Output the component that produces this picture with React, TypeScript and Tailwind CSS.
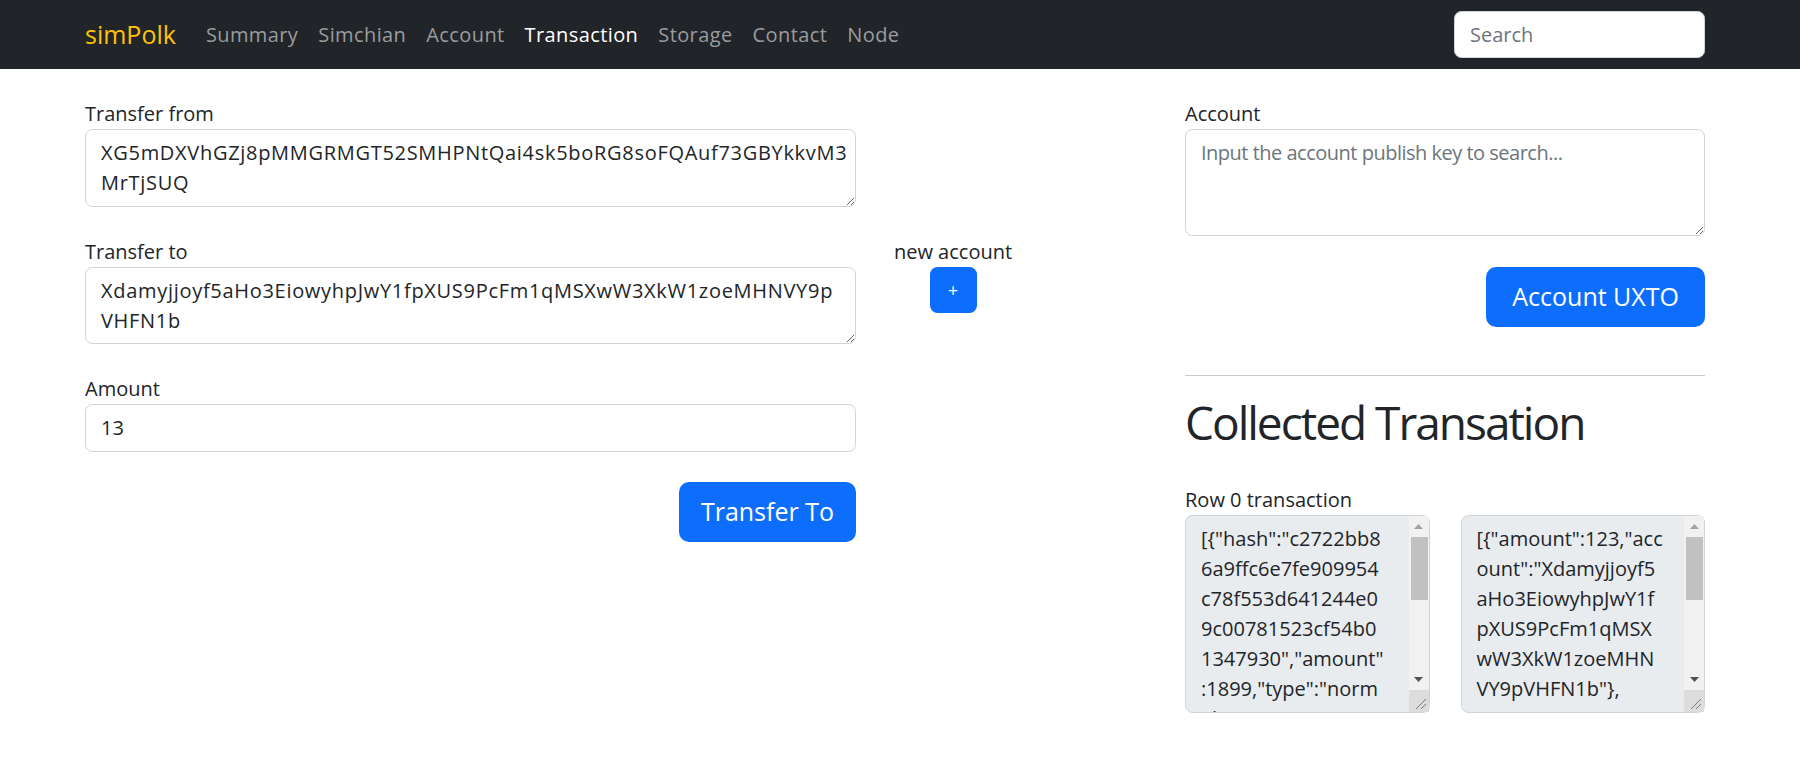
import React from "react";

const FONT = { fontFamily: '"Open Sans", "Noto Sans", sans-serif' };

function FakeScroll() {
  return (
    <div className="pointer-events-none absolute right-[1px] top-[1px] bottom-[1px] flex w-[20px] flex-col bg-[#f1f1f1]">
      <div className="flex h-[21px] items-center justify-center">
        <svg width="9" height="5" viewBox="0 0 9 5">
          <path d="M0 5 L4.5 0 L9 5Z" fill="#a3a3a3" />
        </svg>
      </div>
      <div className="ml-[2px] mr-[1px] h-[63px] bg-[#c1c1c1]" />
      <div className="flex-1" />
      <div className="flex h-[22px] items-center justify-center">
        <svg width="9" height="5" viewBox="0 0 9 5">
          <path d="M0 0 L4.5 5 L9 0Z" fill="#505050" />
        </svg>
      </div>
      <div className="relative h-[22px] bg-[#dcdcdc]">
        <svg className="absolute right-0 bottom-0" width="22" height="22" viewBox="0 0 22 22">
          <path d="M19 9 L9 19 M19 14 L14 19" stroke="#7a7a7a" strokeWidth="1" />
        </svg>
      </div>
    </div>
  );
}

function ReadBox({ text }: { text: string }) {
  return (
    <div className="relative h-[198px]">
      <textarea
        readOnly
        wrap="off"
        defaultValue={text}
        className="block h-full w-full resize-none overflow-hidden rounded-[7.5px] border border-[#ced4da] bg-[#e9ecef] py-[7.5px] pl-[15px] pr-[35px] text-[20px] leading-[30px] tracking-[0px] text-[#212529] outline-none"
        style={FONT}
      />
      <FakeScroll />
    </div>
  );
}

const fieldCls =
  "block w-full rounded-[7.5px] border border-[#ced4da] bg-white px-[15px] text-[20px] text-[#212529] outline-none";

export default function App() {
  const links = ["Summary", "Simchian", "Account", "Transaction", "Storage", "Contact", "Node"];
  return (
    <div className="min-h-screen bg-white text-[#212529]" style={FONT}>
      <nav className="h-[69px] bg-[#212529]">
        <div className="ml-[85px] flex h-full w-[1620px] items-center">
          <span className="mr-[20px] text-[25px] leading-[37px] text-[#ffc107]">simPolk</span>
          <ul className="flex">
            {links.map((l) => (
              <li key={l}>
                <span
                  className={
                    "block px-[10px] text-[20px] leading-[30px] tracking-[0.4px] " +
                    (l === "Transaction" ? "text-white" : "text-[#9a9c9e]")
                  }
                >
                  {l}
                </span>
              </li>
            ))}
          </ul>
          <input
            placeholder="Search"
            className="ml-auto h-[47px] w-[251px] rounded-[7.5px] border border-[#ced4da] bg-white px-[15px] text-[20px] text-[#212529] outline-none placeholder:text-[#6c757d]"
            style={FONT}
          />
        </div>
      </nav>

      <div className="ml-[85px] flex w-[1620px] pt-[30px]">
        {/* left */}
        <div className="flex w-[1100px] flex-col">
          <div className="flex w-[771px] flex-col">
            <label className="text-[20px] leading-[30px]">Transfer from</label>
            <textarea
              rows={2}
              wrap="off"
              defaultValue={"XG5mDXVhGZj8pMMGRMGT52SMHPNtQai4sk5boRG8soFQAuf73GBYkkvM3\nMrTjSUQ"}
              className={fieldCls + " h-[78px] resize-y overflow-hidden py-[7.5px] leading-[30px] tracking-[0.7px]"}
              style={FONT}
            />
          </div>
          <div className="mt-[30px] flex">
            <div className="flex w-[771px] flex-col">
              <label className="text-[20px] leading-[30px]">Transfer to</label>
              <textarea
                rows={2}
                wrap="off"
                defaultValue={"Xdamyjjoyf5aHo3EiowyhpJwY1fpXUS9PcFm1qMSXwW3XkW1zoeMHNVY9p\nVHFN1b"}
                className={fieldCls + " h-[77px] resize-y overflow-hidden py-[7.5px] leading-[30px] tracking-[0.7px]"}
                style={FONT}
              />
            </div>
            <div className="flex w-[194px] flex-col items-center">
              <span className="text-[20px] leading-[30px]">new account</span>
              <button className="flex h-[46px] w-[47px] items-center justify-center rounded-[7.5px] bg-[#0d6efd] text-[17.5px] text-white">
                +
              </button>
            </div>
          </div>
          <div className="mt-[30px] flex w-[771px] flex-col">
            <label className="text-[20px] leading-[30px]">Amount</label>
            <input defaultValue="13" className={fieldCls + " h-[47.5px]"} style={FONT} />
            <button className="mt-[30px] h-[60px] self-end rounded-[10px] bg-[#0d6efd] px-[22px] text-[25px] text-white">
              Transfer To
            </button>
          </div>
        </div>

        {/* right */}
        <div className="flex w-[520px] flex-col">
          <label className="text-[20px] leading-[30px]">Account</label>
          <textarea
            rows={3}
            placeholder="Input the account publish key to search..."
            className={fieldCls + " h-[107px] resize-y py-[7.5px] leading-[30px] tracking-[-0.5px] placeholder:text-[#6c757d]"}
            style={FONT}
          />
          <button className="mt-[31px] h-[60px] self-end rounded-[10px] bg-[#0d6efd] px-[26px] text-[25px] text-white">
            Account UXTO
          </button>
          <hr className="mt-[48px] border-0 border-t border-[#c9cacc]" />
          <h1 className="mt-[16px] text-[46px] leading-[60px] font-normal tracking-[-2px]">Collected Transation</h1>
          <label className="mt-[33px] text-[20px] leading-[30px]">Row 0 transaction</label>
          <div className="grid grid-cols-2 gap-[31px]">
            <ReadBox
              text={
                '[{"hash":"c2722bb8\n6a9ffc6e7fe909954\nc78f553d641244e0\n9c00781523cf54b0\n1347930","amount"\n:1899,"type":"norm\nal","time":1617348823}]'
              }
            />
            <ReadBox
              text={
                '[{"amount":123,"acc\nount":"Xdamyjjoyf5\naHo3EiowyhpJwY1f\npXUS9PcFm1qMSX\nwW3XkW1zoeMHN\nVY9pVHFN1b"},\n{"amount":1776,"ac'
              }
            />
          </div>
        </div>
      </div>
    </div>
  );
}
